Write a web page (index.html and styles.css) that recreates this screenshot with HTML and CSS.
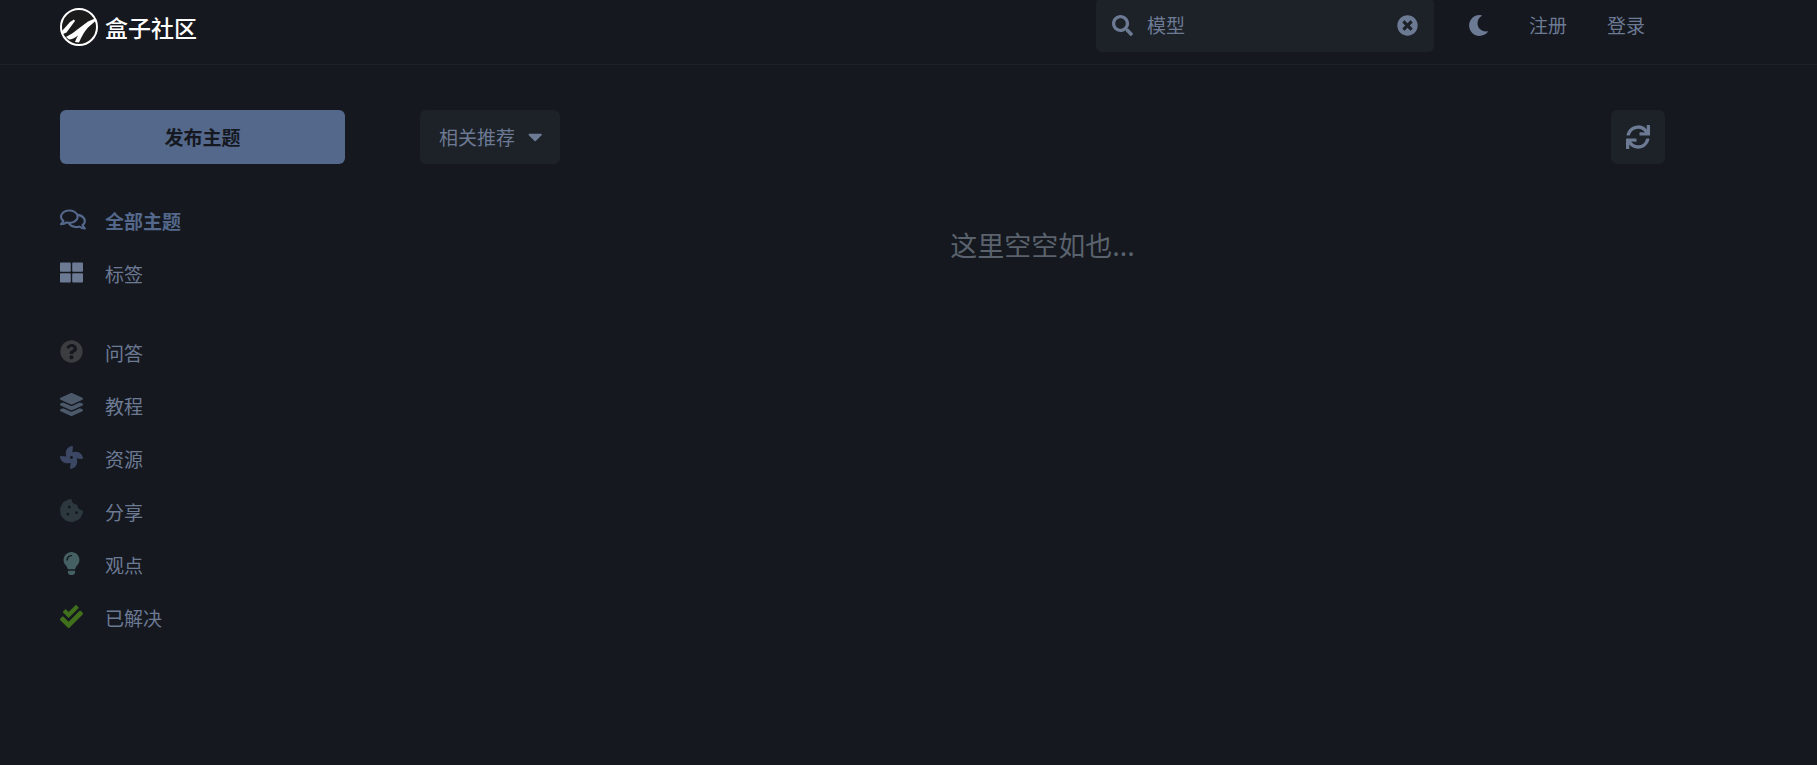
FILE: index.html
```
<!DOCTYPE html>
<html lang="zh-CN">

<head>
    <meta charset="UTF-8">
    <meta name="viewport" content="width=device-width, initial-scale=1.0">
    <title>盒子社区</title>
    <link rel="stylesheet" href="styles.css">
</head>

<body>

    <header class="header">
        <a class="logo" href="#">
            <svg class="logo-mark" viewBox="0 0 38 38" aria-hidden="true">
                <circle cx="19" cy="19" r="18" fill="#1b1b1c" stroke="#fff" stroke-width="2"/>
                <path d="M2 23L10 14L14 11.500L15 13L12 17L6.500 24.500L3 26Z" fill="#fff"/>
                <path d="M6 29Q13 25.500 18 21L28 13.500L35 10.500L36 12.500L28 19.500Q23 25 19 34.500L15 34Q16 31 18 27.500Q13 31.500 9 31.500Z" fill="#fff"/>
            </svg>
            <span>盒子社区</span>
        </a>

        <nav class="header-controls">
            <form class="search" onsubmit="event.preventDefault();">
                <svg class="icon-small" viewBox="0 0 512 512" aria-hidden="true"><path d="M505 442.7L405.3 343c-4.5-4.5-10.6-7-17-7H372c27.6-35.3 44-79.7 44-128C416 93.1 322.9 0 208 0S0 93.1 0 208s93.1 208 208 208c48.3 0 92.7-16.4 128-44v16.3c0 6.4 2.5 12.5 7 17l99.7 99.7c9.4 9.4 24.6 9.4 33.9 0l28.3-28.3c9.4-9.4 9.4-24.6.1-34zM208 336c-70.7 0-128-57.2-128-128 0-70.7 57.2-128 128-128 70.7 0 128 57.2 128 128 0 70.7-57.2 128-128 128z"/></svg>
                <input type="text" id="searchInput" aria-label="搜索" value="模型">
                <button type="button" class="clear" id="clearSearch" aria-label="清除">
                    <svg class="icon-small" viewBox="0 0 512 512" aria-hidden="true"><path d="M256 8C119 8 8 119 8 256s111 248 248 248 248-111 248-248S393 8 256 8zm121.6 313.1c4.7 4.7 4.7 12.3 0 17L338 377.600c-4.700 4.700-12.300 4.700-17 0L256 312l-65.100 65.600c-4.700 4.700-12.300 4.700-17 0L134.400 338c-4.700-4.700-4.700-12.300 0-17l65.600-65-65.600-65.100c-4.700-4.700-4.700-12.300 0-17l39.600-39.600c4.700-4.700 12.300-4.700 17 0l65 65.700 65.100-65.600c4.700-4.700 12.300-4.700 17 0l39.600 39.600c4.700 4.700 4.700 12.300 0 17L312 256l65.600 65.100z"/></svg>
                </button>
            </form>
            <button type="button" class="link-button" aria-label="夜间模式">
                <svg class="icon-small" viewBox="0 0 512 512" aria-hidden="true"><path d="M283.211 512c78.962 0 151.079-35.925 198.857-94.792 7.068-8.708-.639-21.430-11.562-19.350-124.203 23.654-238.262-71.576-238.262-196.954 0-72.222 38.662-138.635 101.498-174.394 9.686-5.512 7.250-20.197-3.756-22.230A258.156 258.156 0 0 0 283.211 0c-141.309 0-256 114.511-256 256 0 141.309 114.511 256 256 256z"/></svg>
            </button>
            <button type="button" class="link-button">注册</button>
            <button type="button" class="link-button">登录</button>
        </nav>
    </header>

    <div class="container">
        <aside class="sidebar">
            <button type="button" class="new-topic">发布主题</button>

            <nav class="side-nav">
                <a class="active" href="#">
                    <svg viewBox="0 0 576 512" aria-hidden="true"><path d="M532 386.2c27.5-27.1 44-61.1 44-98.2 0-80-76.5-146.1-176.2-157.9C368.3 72.5 294.3 32 208 32 93.1 32 0 103.6 0 192c0 37 16.5 71 44 98.2-15.3 30.7-37.3 54.5-37.700 54.900-6.300 6.700-8.100 16.500-4.400 25 3.600 8.500 12 14 21.200 14 53.500 0 96.700-20.200 125.200-38.800 9.200 2.100 18.700 3.700 28.400 4.900C208.100 407.600 281.800 448 368 448c20.800 0 40.800-2.400 59.800-6.800C456.300 459.700 499.400 480 553 480c9.200 0 17.500-5.500 21.200-14 3.600-8.500 1.900-18.300-4.400-25-.4-.3-22.500-24.100-37.800-54.800zm-392.800-92.300L122.100 305c-14.100 9.100-28.500 16.300-43.100 21.400 2.700-4.700 5.400-9.700 8-14.800l15.500-31.100L77.700 256C64.200 242.600 48 220.700 48 192c0-60.700 73.300-112 160-112s160 51.300 160 112-73.300 112-160 112c-16.500 0-33-1.900-49-5.600l-19.800-4.500zM498.300 352l-24.700 24.400 15.500 31.100c2.600 5.100 5.300 10.100 8 14.800-14.600-5.100-29-12.300-43.100-21.400l-17.100-11.100-19.900 4.600c-16 3.700-32.500 5.600-49 5.600-54 0-102.200-20.100-131.300-49.700C338 339.500 416 272.900 416 192c0-3.400-.4-6.700-.7-10C479.700 196.500 528 238.800 528 288c0 28.700-16.200 50.600-29.700 64z"/></svg>
                    <span>全部主题</span>
                </a>
                <a href="#">
                    <svg viewBox="0 0 512 512" aria-hidden="true"><path d="M296 32h192c13.255 0 24 10.745 24 24v160c0 13.255-10.745 24-24 24H296c-13.255 0-24-10.745-24-24V56c0-13.255 10.745-24 24-24zm-80 0H24C10.745 32 0 42.745 0 56v160c0 13.255 10.745 24 24 24h192c13.255 0 24-10.745 24-24V56c0-13.255-10.745-24-24-24zM0 296v160c0 13.255 10.745 24 24 24h192c13.255 0 24-10.745 24-24V296c0-13.255-10.745-24-24-24H24c-13.255 0-24 10.745-24 24zm296 184h192c13.255 0 24-10.745 24-24V296c0-13.255-10.745-24-24-24H296c-13.255 0-24 10.745-24 24v160c0 13.255 10.745 24 24 24z"/></svg>
                    <span>标签</span>
                </a>
            </nav>

            <nav class="side-nav tags">
                <a class="tag-question" href="#">
                    <svg viewBox="0 0 512 512" aria-hidden="true"><path d="M504 256c0 136.997-111.043 248-248 248S8 392.997 8 256C8 119.083 119.043 8 256 8s248 111.083 248 248zM262.655 90c-54.497 0-89.255 22.957-116.549 63.758-3.536 5.286-2.353 12.415 2.715 16.258l34.699 26.310c5.205 3.947 12.621 3.008 16.665-2.122 17.864-22.658 30.113-35.797 57.303-35.797 20.429 0 45.698 13.148 45.698 32.958 0 14.976-12.363 22.667-32.534 33.976C247.128 238.528 216 254.941 216 296v4c0 6.627 5.373 12 12 12h56c6.627 0 12-5.373 12-12v-1.333c0-28.462 83.186-29.647 83.186-106.667 0-58.002-60.165-102-116.531-102zM256 338c-25.365 0-46 20.635-46 46 0 25.364 20.635 46 46 46s46-20.636 46-46c0-25.365-20.635-46-46-46z"/></svg>
                    <span>问答</span>
                </a>
                <a class="tag-tutorial" href="#">
                    <svg viewBox="0 0 512 512" aria-hidden="true"><path d="M12.410 148.020l232.940 105.670c6.800 3.090 14.490 3.090 21.290 0l232.940-105.670c16.550-7.510 16.550-32.520 0-40.030L266.650 2.310a25.607 25.607 0 0 0-21.290 0L12.410 107.980c-16.550 7.510-16.550 32.530 0 40.040zm487.180 88.280l-58.090-26.330-161.640 73.270c-7.560 3.430-15.590 5.170-23.860 5.170s-16.290-1.740-23.860-5.170L70.510 209.970l-58.100 26.330c-16.550 7.500-16.550 32.500 0 40l232.940 105.590c6.800 3.080 14.490 3.080 21.290 0L499.590 276.300c16.550-7.500 16.550-32.500 0-40zm0 127.800l-57.870-26.230-161.860 73.370c-7.560 3.430-15.590 5.170-23.860 5.170s-16.290-1.740-23.860-5.170L70.290 337.870 12.410 364.100c-16.550 7.500-16.550 32.500 0 40l232.940 105.590c6.800 3.080 14.490 3.080 21.290 0L499.590 404.100c16.550-7.500 16.550-32.500 0-40z"/></svg>
                    <span>教程</span>
                </a>
                <a class="tag-resource" href="#">
                    <svg viewBox="0 0 512 512" aria-hidden="true"><path d="M352.570 128c-28.090 0-54.090 4.520-77.060 12.860l12.410-123.110C289 7.310 279.810-1.180 269.330.13 189.630 10.130 128 77.640 128 159.430c0 28.090 4.520 54.090 12.860 77.060L17.750 224.080C7.310 223-1.180 232.190.13 242.670c10 79.700 77.510 141.330 159.300 141.330 28.090 0 54.090-4.520 77.060-12.860l-12.410 123.110c-1.050 10.430 8.110 18.930 18.590 17.620 79.700-10 141.330-77.510 141.330-159.300 0-28.090-4.520-54.090-12.860-77.060l123.110 12.410c10.440 1.050 18.930-8.110 17.620-18.590-10-79.700-77.510-141.330-159.300-141.330zM256 288a32 32 0 1 1 32-32 32 32 0 0 1-32 32z"/></svg>
                    <span>资源</span>
                </a>
                <a class="tag-share" href="#">
                    <svg viewBox="0 0 512 512" aria-hidden="true"><path d="M510.520 255.820c-69.970-.85-126.470-57.690-126.470-127.860-70.170 0-127-56.490-127.860-126.450-27.260-4.140-55.130.3-79.720 12.820l-69.130 35.220a132.221 132.221 0 0 0-57.790 57.810l-35.100 68.880a132.645 132.645 0 0 0-12.820 80.950l12.080 76.270a132.521 132.521 0 0 0 37.160 72.960l54.770 54.760a132.036 132.036 0 0 0 72.710 37.060l76.710 12.150c27.510 4.360 55.700-.11 80.530-12.760l69.130-35.210a132.273 132.273 0 0 0 57.790-57.810l35.100-68.880c12.560-24.640 17.010-52.580 12.910-79.910zM176 368c-17.670 0-32-14.330-32-32s14.330-32 32-32 32 14.330 32 32-14.330 32-32 32zm32-160c-17.670 0-32-14.330-32-32s14.330-32 32-32 32 14.330 32 32-14.330 32-32 32zm160 128c-17.670 0-32-14.330-32-32s14.330-32 32-32 32 14.330 32 32-14.330 32-32 32z"/></svg>
                    <span>分享</span>
                </a>
                <a class="tag-opinion" href="#">
                    <svg viewBox="-80 0 512 512" aria-hidden="true"><path d="M96.060 454.350c.010 6.290 1.870 12.450 5.360 17.690l17.090 25.690a31.990 31.990 0 0 0 26.640 14.280h61.710a31.990 31.990 0 0 0 26.640-14.280l17.090-25.690a31.989 31.989 0 0 0 5.360-17.690l.04-38.350H96.010l.05 38.350zM0 176c0 44.370 16.450 84.850 43.560 115.780 16.520 18.850 42.360 58.230 52.210 91.450.04.26.07.52.11.78h160.240c.04-.26.07-.51.11-.78 9.850-33.220 35.690-72.600 52.210-91.450C335.550 260.850 352 220.370 352 176 352 78.610 272.910-.3 175.450 0 73.440.31 0 82.970 0 176zm176-80c-44.110 0-80 35.890-80 80 0 8.840-7.160 16-16 16s-16-7.160-16-16c0-61.760 50.240-112 112-112 8.840 0 16 7.160 16 16s-7.160 16-16 16z"/></svg>
                    <span>观点</span>
                </a>
                <a class="tag-solved" href="#">
                    <svg viewBox="0 0 512 512" aria-hidden="true"><path d="M505 174.8l-39.600-39.600c-9.400-9.400-24.600-9.400-33.900 0L192 374.700 80.600 263.200c-9.400-9.400-24.600-9.400-33.900 0L7 302.900c-9.400 9.400-9.400 24.600 0 34L175 505c9.400 9.400 24.600 9.400 33.900 0l296-296.200c9.400-9.500 9.400-24.700.1-34zm-324.300 106c6.200 6.300 16.400 6.300 22.600 0l208-208.200c6.200-6.300 6.200-16.400 0-22.600L366.100 4.700c-6.200-6.300-16.400-6.300-22.600 0L192 156.200l-55.400-55.500c-6.200-6.300-16.400-6.300-22.600 0L68.700 146c-6.200 6.300-6.200 16.400 0 22.600l112 112.200z"/></svg>
                    <span>已解决</span>
                </a>
            </nav>
        </aside>

        <main class="content">
            <div class="toolbar">
                <div class="sort">
                    <select id="sort" aria-label="排序">
                        <option>相关推荐</option>
                    </select>
                    <svg viewBox="0 0 320 512" aria-hidden="true"><path d="M31.3 192h257.3c17.8 0 26.7 21.5 14.1 34.1L174.1 354.8c-7.8 7.8-20.5 7.8-28.3 0L17.2 226.1C4.6 213.5 13.5 192 31.3 192z"/></svg>
                </div>
                <button type="button" class="refresh" aria-label="刷新">
                    <svg viewBox="0 0 512 512" aria-hidden="true"><path d="M440.650 12.570l4 82.770A247.160 247.160 0 0 0 255.830 8C134.730 8 33.910 94.920 12.290 209.820A12 12 0 0 0 24.090 224h49.050a12 12 0 0 0 11.670-9.260 175.910 175.910 0 0 1 317-56.940l-101.460-4.860a12 12 0 0 0-12.570 12v47.410a12 12 0 0 0 12 12H500a12 12 0 0 0 12-12V12a12 12 0 0 0-12-12h-47.370a12 12 0 0 0-11.980 12.570zM255.830 432a175.610 175.610 0 0 1-146-77.800l101.800 4.870a12 12 0 0 0 12.570-12v-47.400a12 12 0 0 0-12-12H12a12 12 0 0 0-12 12V500a12 12 0 0 0 12 12h47.350a12 12 0 0 0 12-12.600l-4.150-82.570A247.170 247.170 0 0 0 255.830 504c121.110 0 221.930-86.920 243.550-201.820a12 12 0 0 0-11.800-14.180h-49.050a12 12 0 0 0-11.670 9.260A175.860 175.860 0 0 1 255.830 432z"/></svg>
                </button>
            </div>
            <p class="empty">这里空空如也...</p>
        </main>
    </div>

    <script>
        document.getElementById('clearSearch').addEventListener('click', () => {
            document.getElementById('searchInput').value = '';
        });
    </script>
</body>

</html>
```
FILE: styles.css
```
* {
    box-sizing: border-box;
}

body {
    margin: 0;
    background-color: #15181f;
    color: #6c7a94;
    font-family: "Noto Sans CJK SC", sans-serif;
    font-size: 19px;
    line-height: 30px;
}

a {
    color: inherit;
    text-decoration: none;
}

button,
input,
select {
    font: inherit;
    color: inherit;
    border: none;
    background: none;
    padding: 0;
    margin: 0;
}

button {
    cursor: pointer;
}

svg {
    display: block;
    height: 23px;
    fill: currentColor;
    flex-shrink: 0;
}

/* Header */
.header {
    display: flex;
    justify-content: space-between;
    padding: 0 152px 12px 60px;
    border-bottom: 1px solid #1d2128;
}

.logo {
    display: flex;
    align-items: center;
    gap: 7px;
    padding-top: 2px;
    color: #ffffff;
    font-size: 23px;
    font-weight: 500;
}

.logo .logo-mark {
    width: 38px;
    height: 38px;
}

/* the search box runs slightly past the top edge */
.header-controls {
    display: flex;
    margin-top: -2px;
}

.search {
    display: flex;
    align-items: center;
    width: 338px;
    height: 54px;
    margin-right: 14px;
    padding: 0 16px;
    border-radius: 6px;
    background-color: #1d2128;
}

.search input {
    flex: 1;
    min-width: 0;
    height: 30px;
    margin-left: 14px;
    outline: none;
}

.icon-small {
    width: 21px;
    height: 21px;
}

.link-button {
    padding: 0 20px;
}

/* Page */
.container {
    display: flex;
    gap: 75px;
    padding: 45px 152px 60px 60px;
}

.sidebar {
    width: 285px;
    flex-shrink: 0;
}

.new-topic {
    width: 100%;
    height: 54px;
    border-radius: 6px;
    background-color: #54688b;
    color: #15181f;
    font-weight: 700;
}

.side-nav {
    margin-top: 30px;
}

.side-nav.tags {
    margin-top: 26px;
}

.side-nav a {
    display: grid;
    grid-template-columns: 45px 1fr;
    align-items: center;
    height: 53px;
}

.side-nav svg {
    margin-bottom: 3px;
}

.side-nav .active {
    color: #54688b;
    font-weight: 700;
}

.tag-question svg {
    color: #3b3d40;
}

.tag-tutorial svg {
    color: #4b596b;
}

.tag-resource svg {
    color: #3b4763;
}

.tag-share svg {
    color: #2c373e;
}

.tag-opinion svg {
    color: #456062;
}

.tag-solved svg {
    color: #41701c;
}

.content {
    flex: 1;
}

.toolbar {
    display: flex;
    justify-content: space-between;
}

.sort {
    position: relative;
}

.sort select {
    width: 140px;
    height: 54px;
    padding: 0 19px;
    border-radius: 6px;
    background-color: #1d2128;
    appearance: none;
    cursor: pointer;
}

.sort svg {
    position: absolute;
    top: 15px;
    right: 18px;
    pointer-events: none;
}

.refresh {
    display: flex;
    align-items: center;
    justify-content: center;
    width: 54px;
    height: 54px;
    border-radius: 6px;
    background-color: #1d2128;
}

.refresh svg {
    height: 24px;
}

.empty {
    margin: 60px 0 0;
    color: #5a626d;
    font-size: 27px;
    line-height: 42px;
    text-align: center;
}
```
